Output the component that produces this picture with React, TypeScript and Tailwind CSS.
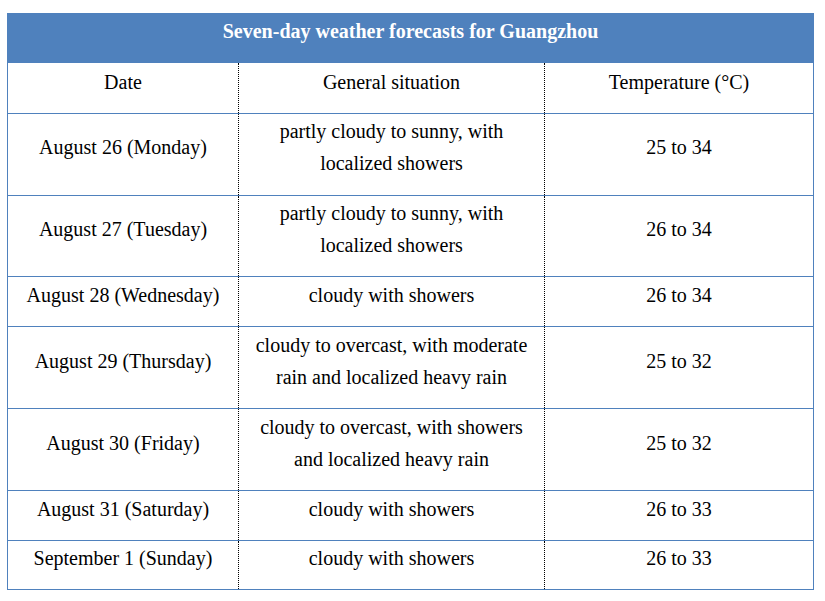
const rows: { date: string; situation: string[]; temp: string; pad?: string }[] = [
  { date: 'August 26 (Monday)', situation: ['partly cloudy to sunny, with', 'localized showers'], temp: '25 to 34', pad: 'pt-[1px] pb-[16px]' },
  { date: 'August 27 (Tuesday)', situation: ['partly cloudy to sunny, with', 'localized showers'], temp: '26 to 34', pad: 'pt-[1px] pb-[15px]' },
  { date: 'August 28 (Wednesday)', situation: ['cloudy with showers'], temp: '26 to 34' },
  { date: 'August 29 (Thursday)', situation: ['cloudy to overcast, with moderate', 'rain and localized heavy rain'], temp: '25 to 32' },
  { date: 'August 30 (Friday)', situation: ['cloudy to overcast, with showers', 'and localized heavy rain'], temp: '25 to 32' },
  { date: 'August 31 (Saturday)', situation: ['cloudy with showers'], temp: '26 to 33' },
  { date: 'September 1 (Sunday)', situation: ['cloudy with showers'], temp: '26 to 33', pad: 'pt-[1px] pb-[15px]' },
];

function Row({ cells, last, pad = 'pt-[2px] pb-[15px]' }: { cells: React.ReactNode[]; last?: boolean; pad?: string }) {
  return (
    <div className={`flex ${last ? '' : 'border-b border-[#4f81bd]'}`}>
      <div className={`w-[231px] shrink-0 flex flex-col justify-center border-r border-dotted border-black text-center ${pad}`}>{cells[0]}</div>
      <div className={`w-[306px] shrink-0 flex flex-col justify-center border-r border-dotted border-black text-center ${pad}`}>{cells[1]}</div>
      <div className={`flex-1 flex flex-col justify-center text-center ${pad}`}>{cells[2]}</div>
    </div>
  );
}

export default function App() {
  return (
    <div className="min-h-[601px] w-[825px] bg-white pt-[13px] pl-[7px]" style={{ fontFamily: '"Liberation Serif", "Times New Roman", serif' }}>
      <div className="w-[807px] border border-[#4f81bd] text-[20px] leading-[32px] text-black">
        {/* Title band */}
        <div className="-mt-px bg-[#4f81bd] pt-[2px] pb-[16px] text-center font-bold text-white">
          Seven-day weather forecasts for Guangzhou
        </div>

        <Row cells={['Date', 'General situation', 'Temperature (°C)']} pad="pt-[3px] pb-[15px]" />
        {rows.map((r, i) => (
          <Row
            key={r.date}
            last={i === rows.length - 1}
            pad={r.pad}
            cells={[
              r.date,
              r.situation.map((line, j) => (
                <div key={j}>{line}</div>
              )),
              r.temp,
            ]}
          />
        ))}
      </div>
    </div>
  );
}
